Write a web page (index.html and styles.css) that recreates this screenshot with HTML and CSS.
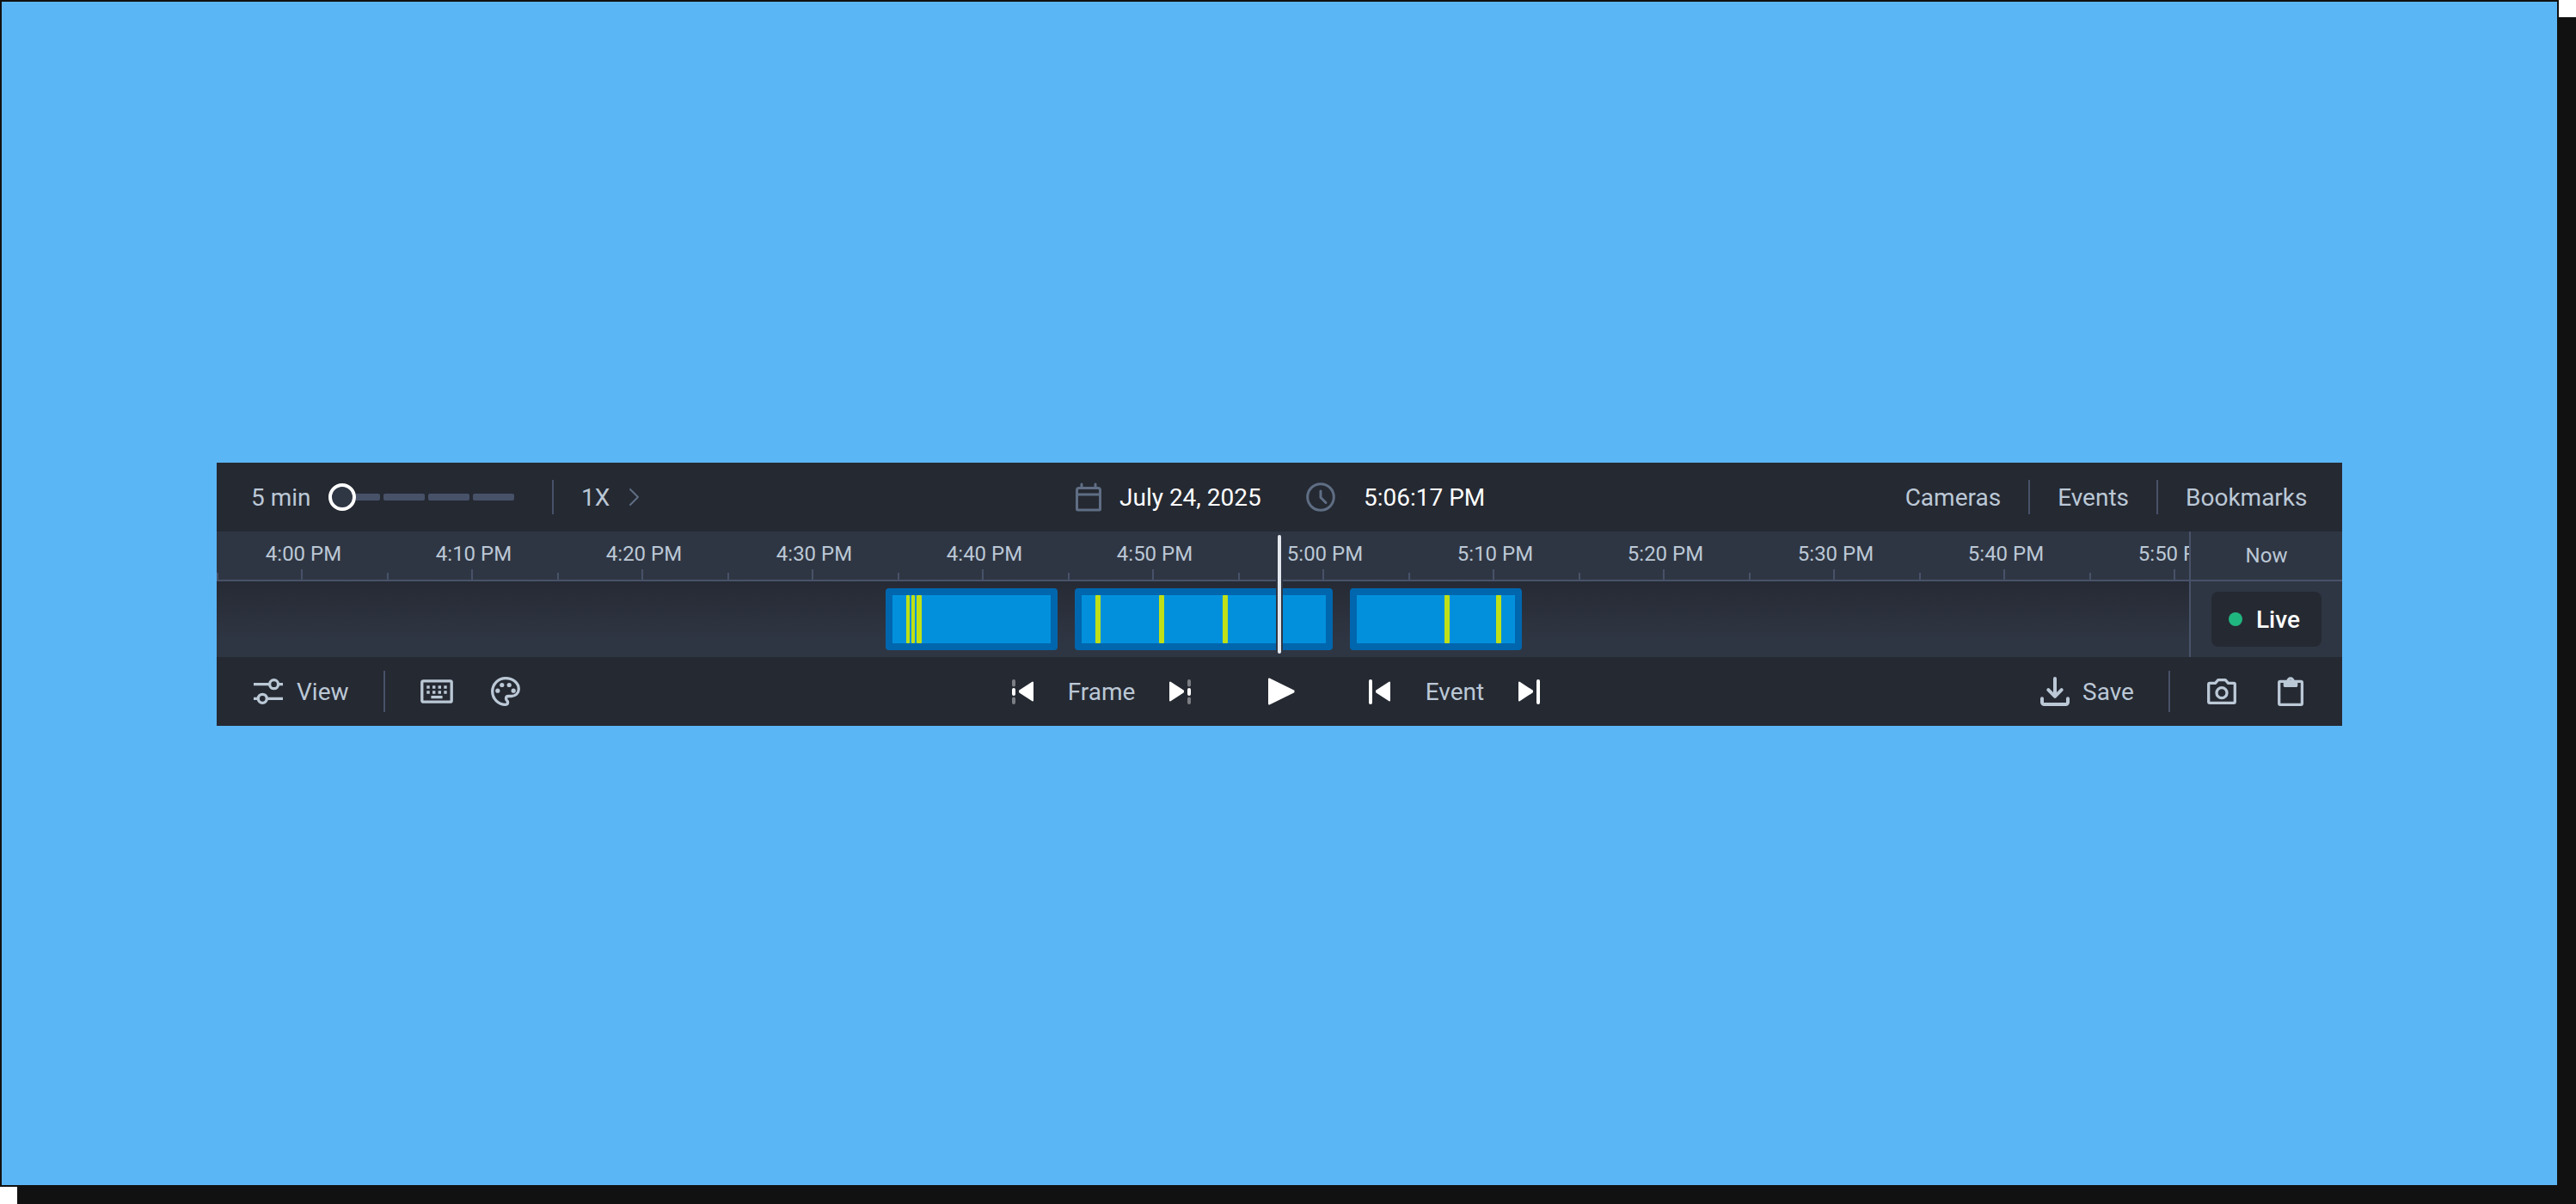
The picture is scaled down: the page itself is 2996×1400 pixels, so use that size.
FILE: index.html
```
<!DOCTYPE html>
<html lang="en">
<head>
    <meta charset="UTF-8">
    <meta name="viewport" content="width=device-width, initial-scale=1.0">
    <title>Timeline Player</title>
    <link rel="stylesheet" href="styles.css">
</head>
<body>
    <main class="stage">
        <section class="player">
            <header class="bar top-bar">
                <div class="bar-left">
                    <span class="zoom-label">5 min</span>
                    <div class="slider">
                        <span class="knob"></span>
                        <span class="step first"></span>
                        <span class="step"></span>
                        <span class="step"></span>
                        <span class="step"></span>
                    </div>
                    <span class="divider"></span>
                    <span class="speed">1X</span>
                    <svg class="chevron" viewBox="0 0 16 24" width="16" height="24"><path d="M3 3l9 9-9 9"/></svg>
                </div>
                <div class="bar-center datetime">
                    <svg class="icon muted" viewBox="0 0 40 40"><path d="M9 9.5h22a2.5 2.5 0 0 1 2.5 2.5v22a1 1 0 0 1-1 1h-25a1 1 0 0 1-1-1V12A2.5 2.5 0 0 1 9 9.5zM7 17h26M12 5v4M28 5v4"/></svg>
                    <span class="date">July 24, 2025</span>
                    <svg class="icon muted" viewBox="0 0 40 40"><circle cx="20" cy="20" r="15.3"/><path d="M20 13v7.5l6 6"/></svg>
                    <span class="time">5:06:17 PM</span>
                </div>
                <nav class="bar-right tabs">
                    <span>Cameras</span>
                    <span class="divider"></span>
                    <span>Events</span>
                    <span class="divider"></span>
                    <span class="bookmarks">Bookmarks</span>
                </nav>
            </header>

            <div class="timeline">
                <div class="timeline-main">
                    <div class="ruler">
                        <span class="mark">4:00 PM</span>
                        <span class="mark">4:10 PM</span>
                        <span class="mark">4:20 PM</span>
                        <span class="mark">4:30 PM</span>
                        <span class="mark">4:40 PM</span>
                        <span class="mark">4:50 PM</span>
                        <span class="mark">5:00 PM</span>
                        <span class="mark">5:10 PM</span>
                        <span class="mark">5:20 PM</span>
                        <span class="mark">5:30 PM</span>
                        <span class="mark">5:40 PM</span>
                        <span class="mark">5:50 PM</span>
                    </div>
                    <div class="track">
                        <div class="clip" style="width: 200px">
                            <i class="event thin" style="margin-left: 16px"></i>
                            <i class="event thin" style="margin-left: 2px"></i>
                            <i class="event" style="margin-left: 2px"></i>
                        </div>
                        <div class="clip" style="width: 300px">
                            <i class="event" style="margin-left: 16px"></i>
                            <i class="event" style="margin-left: 68px"></i>
                            <i class="event" style="margin-left: 68px"></i>
                        </div>
                        <div class="clip" style="width: 200px">
                            <i class="event" style="margin-left: 102px"></i>
                            <i class="event" style="margin-left: 54px"></i>
                        </div>
                    </div>
                    <div class="playhead"></div>
                </div>
                <div class="now">
                    <div class="now-label">Now</div>
                    <div class="now-body">
                        <div class="live"><span class="dot"></span>Live</div>
                    </div>
                </div>
            </div>

            <footer class="bar bottom-bar">
                <div class="bar-left">
                    <svg class="icon" viewBox="0 0 40 40"><path d="M3 11.7h18M31 11.7h6M3 28.3h5M18 28.3h19"/><circle cx="26.6" cy="11.7" r="5"/><circle cx="13.3" cy="28.3" r="5"/></svg>
                    <span class="view">View</span>
                    <span class="divider tall"></span>
                    <svg class="icon keyboard" viewBox="0 0 40 40">
                        <rect x="2.8" y="7.8" width="34.4" height="24.4" rx="1.5"/>
                        <path class="fill" d="M8.3 13.3h3.4v3.4H8.3zM15 13.3h3.4v3.4H15zM21.6 13.3H25v3.4h-3.4zM28.3 13.3h3.4v3.4h-3.4zM8.3 19.3h3.4v3.4H8.3zM15 19.3h3.4v3.4H15zM21.6 19.3H25v3.4h-3.4zM28.3 19.3h3.4v3.4h-3.4z"/>
                        <path d="M13.4 26.6h13.2"/>
                    </svg>
                    <svg class="icon palette" viewBox="0 0 40 40">
                        <path d="M20 4.7C11.5 4.7 4.7 11.5 4.7 20S11.5 35.3 20 35.3c1.7 0 2.6-1.3 2.6-2.7 0-1.8-2.1-2.2-2.1-4.4 0-1.7 1.3-2.7 3-2.7h3.2c4.8 0 8.6-3.5 8.6-8.2C35.3 10.2 28.5 4.7 20 4.7z"/>
                        <g class="fill"><circle cx="10.8" cy="19.2" r="2.6"/><circle cx="15.8" cy="12.5" r="2.6"/><circle cx="24.2" cy="12.5" r="2.6"/><circle cx="29.2" cy="19.2" r="2.6"/></g>
                    </svg>
                </div>
                <div class="bar-center transport">
                    <svg class="control" viewBox="0 0 40 40"><path class="dim" d="M9 8v4.5M9 28.5v4.5"/><path class="dash" d="M9 18v5"/><path class="solid" d="M31 9.5v21L16 20.6v-1.2z"/></svg>
                    <span class="frame">Frame</span>
                    <svg class="control" viewBox="0 0 40 40"><path class="solid" d="M9 9.5v21l15-9.9v-1.2z"/><path class="dim" d="M31 8v4.5M31 28.5v4.5"/><path class="dash" d="M31 18v5"/></svg>
                    <svg class="control play" viewBox="0 0 40 40"><path class="solid" d="M8 5.5v29l28.5-14v-1z"/></svg>
                    <svg class="control" viewBox="0 0 40 40"><path class="dash" d="M10 8v25"/><path class="solid" d="M32 9.5v21L17 20.6v-1.2z"/></svg>
                    <span class="event-label">Event</span>
                    <svg class="control" viewBox="0 0 40 40"><path class="solid" d="M9 9.5v21l15-9.9v-1.2z"/><path class="dash" d="M31 8v25"/></svg>
                </div>
                <div class="bar-right actions">
                    <svg class="icon save" viewBox="0 0 40 40"><path d="M20 5v20M12.3 18.2l7.7 7.700 7.700-7.700M5 28.300v4.200a2.500 2.500 0 0 0 2.500 2.500h25a2.500 2.500 0 0 0 2.500-2.500v-4.200"/></svg>
                    <span class="save-label">Save</span>
                    <span class="divider tall"></span>
                    <svg class="icon" viewBox="0 0 40 40"><path d="M6 10.3h6.500l3.300-3.600h8.400l3.300 3.600H34a1.300 1.300 0 0 1 1.300 1.300V32a1.300 1.300 0 0 1-1.300 1.300H6A1.300 1.300 0 0 1 4.700 32V11.600A1.300 1.300 0 0 1 6 10.300z"/><circle cx="20" cy="21.700" r="6"/></svg>
                    <svg class="icon" viewBox="0 0 40 40"><path d="M8 8.300h24a1.400 1.400 0 0 1 1.400 1.400V34a1.300 1.300 0 0 1-1.300 1.300H8A1.300 1.300 0 0 1 6.700 34V9.700A1.400 1.400 0 0 1 8 8.300z"/><path class="fill" fill-rule="evenodd" d="M11.700 8h3.600a4.700 4.700 0 0 1 9.400 0h3.600v5.600a1.400 1.400 0 0 1-1.400 1.400H13.100a1.400 1.400 0 0 1-1.400-1.400zM20 6.600a1.700 1.700 0 1 0 0 3.400 1.700 1.700 0 0 0 0-3.400z"/></svg>
                </div>
            </footer>
        </section>
    </main>
</body>
</html>
```
FILE: styles.css
```
* {
    box-sizing: border-box;
}
body {
    margin: 0;
    height: 1400px;
    background: #ffffff;
    font-family: Roboto, "Liberation Sans", sans-serif;
    font-size: 28px;
    color: #bbc8d6;
    overflow: hidden;
}
.stage {
    width: 2976px;
    height: 1380px;
    padding: 536px 250px 0;
    border: 2px solid #111111;
    background: #5bb6f5;
    box-shadow: 20px 20px 0 #111111;
}
.player {
    width: 2472px;
    background: #252932;
}

/* bars */
.bar {
    display: grid;
    grid-template-columns: 918px 1fr auto;
    height: 80px;
    padding: 0 40px;
    white-space: nowrap;
}
.bar-left,
.bar-center,
.bar-right {
    display: flex;
    align-items: center;
}
.divider {
    flex: none;
    width: 2px;
    height: 40px;
    background: #475269;
}
.divider.tall {
    height: 48px;
}
.icon,
.control {
    flex: none;
    width: 40px;
    height: 40px;
    fill: none;
    stroke: #bbc8d6;
    stroke-width: 3.3;
    stroke-linejoin: round;
}
.icon .fill {
    fill: #bbc8d6;
    stroke: none;
}
.icon.muted {
    stroke: #5f6e84;
    stroke-width: 3;
    stroke-linecap: round;
}

/* top bar */
.zoom-label {
    width: 90px;
}
.slider {
    display: flex;
    align-items: center;
    gap: 4px;
    margin-right: 44px;
}
.knob {
    width: 32px;
    height: 32px;
    border: 4px solid #ffffff;
    border-radius: 50%;
    background: #2f3644;
}
.step {
    width: 48px;
    height: 8px;
    border-radius: 2px;
    background: #475269;
}
.step.first {
    width: 28px;
    margin-left: -4px;
    border-radius: 0 2px 2px 0;
}
.speed {
    width: 54px;
    margin-left: 32px;
}
.chevron {
    fill: none;
    stroke: #5f6e84;
    stroke-width: 2;
    stroke-linecap: round;
    stroke-linejoin: round;
}
.datetime {
    padding-left: 36px;
    color: #ffffff;
}
.date {
    width: 214px;
    margin-left: 16px;
}
.time {
    margin-left: 30px;
}
.tabs {
    gap: 32px;
}
.bookmarks {
    width: 142px;
}

/* timeline */
.timeline {
    display: flex;
    height: 146px;
    background: #2f3643;
}
.timeline-main {
    position: relative;
    width: 2294px;
}
.ruler {
    display: flex;
    height: 58px;
    overflow: hidden;
    border-bottom: 2px solid #475269;
    font-size: 24px;
    line-height: 28px;
}
.mark {
    flex: none;
    width: 198px;
    padding: 12px 0 0 4px;
    text-align: center;
    background:
        linear-gradient(#475269, #475269) 0 100% / 2px 8px no-repeat,
        linear-gradient(#475269, #475269) 98px 100% / 2px 12px no-repeat;
}
.track {
    display: flex;
    gap: 20px;
    height: 88px;
    padding: 8px 0 8px 778px;
    background: linear-gradient(#262a34, #2f3643 80%);
}
.clip {
    display: flex;
    border: 8px solid #0066ae;
    border-radius: 4px;
    background: #0290dc;
}
.event {
    width: 6px;
    border-radius: 1px;
    background: #bfe016;
}
.event.thin {
    width: 4px;
}
.playhead {
    position: absolute;
    top: 4px;
    left: 1234px;
    width: 4px;
    height: 138px;
    border-radius: 2px;
    background: #e3e8ef;
    box-shadow: -2px 0 0 #2f3643, 2px 0 0 #2f3643;
}
.now {
    width: 178px;
    border-left: 2px solid #475269;
}
.now-label {
    height: 58px;
    padding-top: 14px;
    border-bottom: 2px solid #475269;
    font-size: 24px;
    line-height: 28px;
    text-align: center;
}
.now-body {
    padding: 12px 24px;
}
.live {
    display: flex;
    align-items: center;
    gap: 16px;
    height: 64px;
    padding-left: 20px;
    border-radius: 8px;
    background: #252932;
    color: #ffffff;
    font-weight: 500;
}
.dot {
    width: 16px;
    height: 16px;
    border-radius: 50%;
    background: #20b680;
}

/* bottom bar */
.view {
    width: 101px;
    margin-left: 13px;
}
.keyboard,
.palette {
    margin-left: 40px;
}
.control .solid {
    fill: #ffffff;
    stroke: #ffffff;
    stroke-width: 2;
}
.control .dash,
.control .dim {
    stroke: #ffffff;
    stroke-width: 4;
    stroke-linecap: round;
}
.control .dim {
    opacity: 0.4;
}
.transport {
    margin-left: -40px;
}
.frame {
    width: 142px;
    text-align: center;
}
.event-label {
    width: 134px;
    padding-left: 2px;
    text-align: center;
}
.play {
    margin: 0 76px;
}
.save {
    stroke-width: 4;
    stroke-linecap: round;
}
.save-label {
    width: 100px;
    margin-left: 12px;
}
.actions .divider {
    margin-right: 40px;
}
.actions .icon:last-child {
    margin-left: 40px;
}
```
